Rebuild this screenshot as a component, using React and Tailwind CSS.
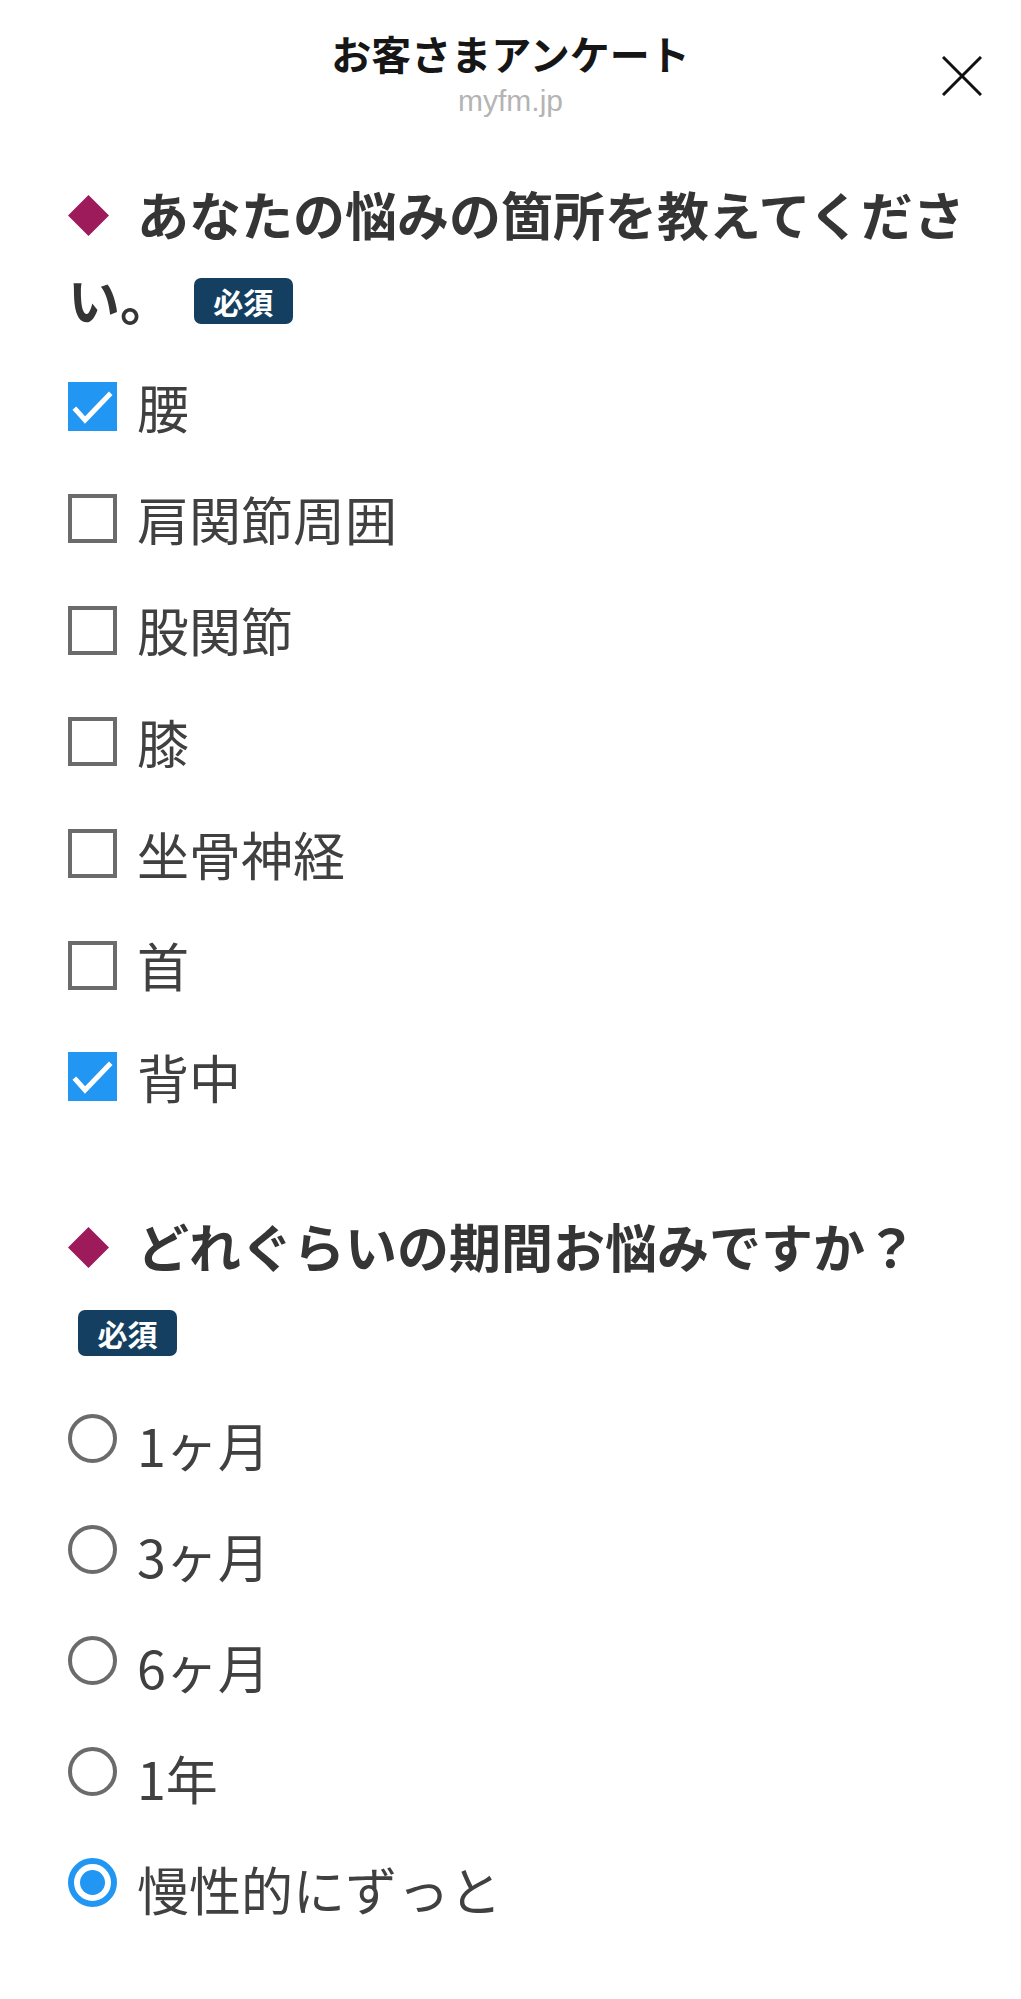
const areas = [
  { label: '腰', checked: true },
  { label: '肩関節周囲', checked: false },
  { label: '股関節', checked: false },
  { label: '膝', checked: false },
  { label: '坐骨神経', checked: false },
  { label: '首', checked: false },
  { label: '背中', checked: true }
];

const periods = ['1ヶ月', '3ヶ月', '6ヶ月', '1年', '慢性的にずっと'];
const selected = '慢性的にずっと';

const jp = { fontFamily: '"Noto Sans CJK JP", "Noto Sans", sans-serif' };

function Required() {
  return (
    <span className="relative -top-[6px] ml-[10px] inline-flex h-[46px] w-[99px] items-center justify-center rounded-[7px] bg-[#153f60] align-middle text-[30px] font-bold leading-none text-white">
      必須
    </span>
  );
}

function Question({ children }) {
  return (
    <h2 className="text-[52px] font-bold leading-[85px] text-[#353535]">
      <span className="relative -top-[6px] inline-flex h-[41px] w-[69px] items-center align-middle">
        <span className="ml-[6px] h-[29px] w-[29px] rotate-45 bg-[#9d1b5b]" />
      </span>
      {children} <Required />
    </h2>
  );
}

function Checkbox({ label, checked }) {
  return (
    <label className="flex h-[111.7px] items-center gap-[20px]">
      {checked ? (
        <span className="flex h-[49px] w-[49px] shrink-0 items-center justify-center bg-[#2196f3]">
          <svg viewBox="0 0 49 49" className="h-[49px] w-[49px]">
            <path d="M8 28 L17 38 L41 13" fill="none" stroke="#fff" strokeWidth="5" strokeLinecap="square" />
          </svg>
        </span>
      ) : (
        <span className="h-[49px] w-[49px] shrink-0 border-[4px] border-[#6b6b6b] bg-white" />
      )}
      <span className="text-[52px] text-[#404040]">{label}</span>
    </label>
  );
}

function Radio({ label, checked }) {
  return (
    <label className="flex h-[111px] items-center gap-[20px]">
      {checked ? (
        <span className="relative -top-[7px] flex h-[49px] w-[49px] shrink-0 items-center justify-center rounded-full border-[6px] border-[#2196f3]">
          <span className="h-[25px] w-[25px] rounded-full bg-[#2196f3]" />
        </span>
      ) : (
        <span className="relative -top-[7px] h-[49px] w-[49px] shrink-0 rounded-full border-[4px] border-[#6b6b6b]" />
      )}
      <span className="text-[52px] text-[#404040]">{label}</span>
    </label>
  );
}

export default function App() {
  return (
    <div className="min-h-[1999px] bg-white" style={jp}>
      <header className="relative flex flex-col items-center pt-[29px]">
        <h1 className="text-[40px] font-bold leading-[48px] text-[#161616]">お客さまアンケート</h1>
        <p
          className="mt-[6px] text-[30px] leading-[36px] text-[#b4b4b4]"
          style={{ fontFamily: '"Liberation Sans", Arial, sans-serif' }}
        >
          myfm.jp
        </p>
        <button className="absolute right-[39px] top-[56px] h-[40px] w-[40px]" aria-label="閉じる">
          <svg viewBox="0 0 40 40" className="h-[40px] w-[40px]">
            <path d="M1 1 L39 39 M39 1 L1 39" stroke="#111" strokeWidth="3" />
          </svg>
        </button>
      </header>

      <main className="pl-[68px] pr-[40px]">
        <section className="mt-[52px]">
          <Question>あなたの悩みの箇所を教えてください。</Question>
          <div className="mt-[10px]">
            {areas.map((a) => (
              <Checkbox key={a.label} label={a.label} checked={a.checked} />
            ))}
          </div>
        </section>

        <section className="mt-[70px]">
          <Question>どれぐらいの期間お悩みですか？</Question>
          <div className="mt-[17px]">
            {periods.map((p) => (
              <Radio key={p} label={p} checked={p === selected} />
            ))}
          </div>
        </section>
      </main>
    </div>
  );
}
